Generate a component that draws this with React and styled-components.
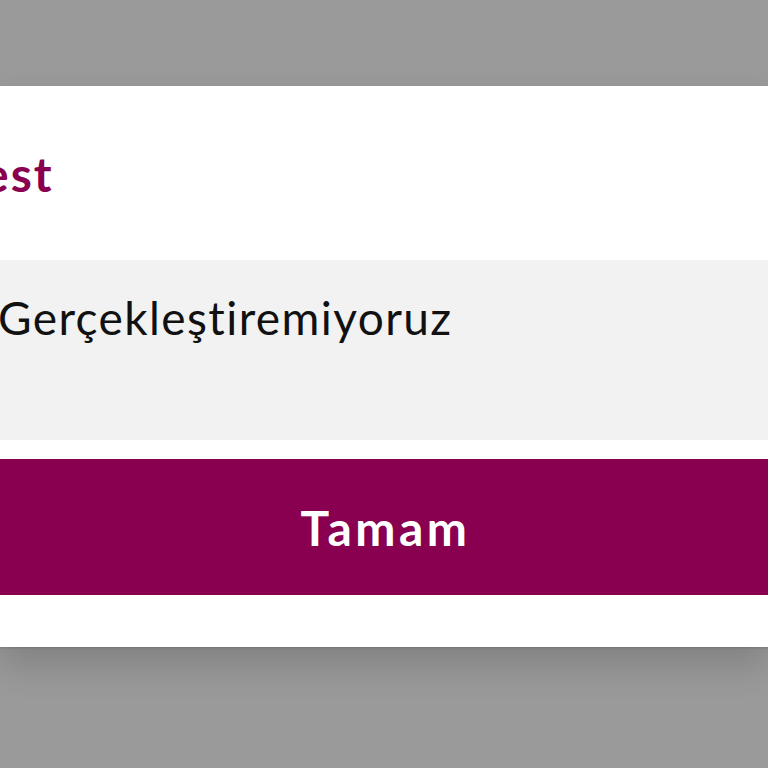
import styled, { createGlobalStyle } from "styled-components";

const GlobalStyle = createGlobalStyle`
  html, body {
    margin: 0;
    padding: 0;
    overflow: hidden;
  }
  body {
    font-family: Lato, "Noto Sans", sans-serif;
    font-variant-ligatures: none;
  }
`;

const Backdrop = styled.div`
  width: 768px;
  height: 768px;
  background: #9a9a9a;
  padding-top: 86px;
  box-sizing: border-box;
  overflow: hidden;
`;

const Dialog = styled.section`
  height: 561px;
  background: #ffffff;
  box-shadow: 0 1px 2px rgba(0, 0, 0, 0.15), 0 18px 34px rgba(0, 0, 0, 0.16);
  padding-top: 64px;
  box-sizing: border-box;
  display: flex;
  flex-direction: column;
`;

const Title = styled.h2`
  margin: 0 0 0 -17px;
  font-size: 48px;
  line-height: 1;
  font-weight: 700;
  letter-spacing: 2px;
  color: #88004f;
`;

const Message = styled.div`
  margin-top: 62px;
  height: 180px;
  background: #f2f2f2;
  padding-top: 35px;
  box-sizing: border-box;
`;

const MessageText = styled.p`
  margin: 0 0 0 -2px;
  font-size: 46px;
  line-height: 1;
  letter-spacing: 1.4px;
  color: #111111;
`;

const OkButton = styled.button`
  margin-top: 19px;
  height: 136px;
  width: 100%;
  border: none;
  background: #88004f;
  color: #ffffff;
  font-family: Lato, "Noto Sans", sans-serif;
  font-variant-ligatures: none;
  font-size: 48px;
  font-weight: 700;
  letter-spacing: 3.5px;
  display: flex;
  align-items: center;
  justify-content: center;
  padding: 0 0 0 3px;
  cursor: pointer;
`;

export default function App() {
  return (
    <>
      <GlobalStyle />
      <Backdrop>
        <Dialog>
          <Title>est</Title>
          <Message>
            <MessageText>Gerçekleştiremiyoruz</MessageText>
          </Message>
          <OkButton>Tamam</OkButton>
        </Dialog>
      </Backdrop>
    </>
  );
}
